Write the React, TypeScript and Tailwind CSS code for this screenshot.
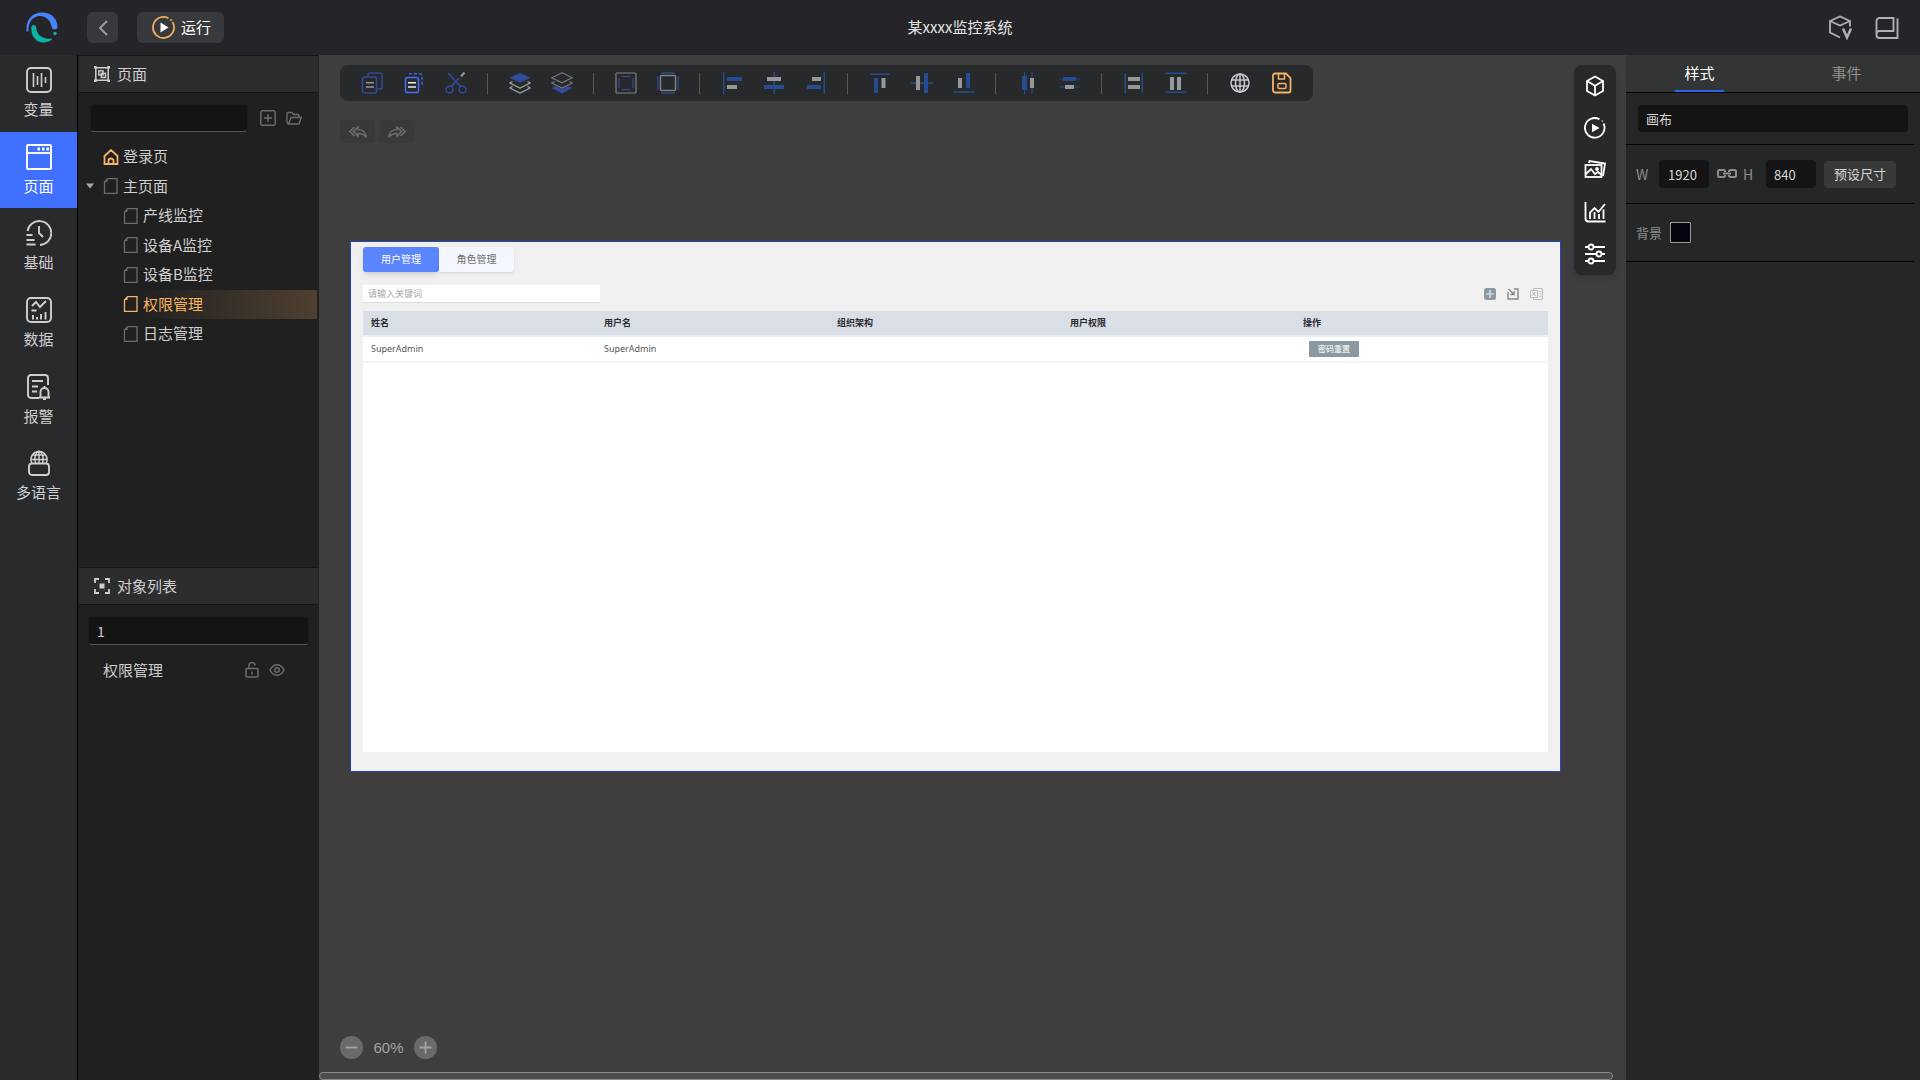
import type { ReactNode } from "react";

const BLUE = "#304a9c";
const ALIGN = "#254c90";
const GREY = "#969798";

function Svg({ size = 22, box = 22, weight = 1.5, children }: { size?: number; box?: number; weight?: number; children: ReactNode }) {
  return (
    <svg width={size} height={size} viewBox={`0 0 ${box} ${box}`} fill="none" stroke="currentColor" strokeWidth={weight} aria-hidden="true" className="shrink-0">
      {children}
    </svg>
  );
}

/* ---------- left rail ---------- */

const rail: { label: string; icon: ReactNode; active?: boolean }[] = [
  {
    label: "变量",
    icon: (
      <>
        <rect x="1" y="1" width="24" height="24" rx="4" />
        <path d="M7.500 6v14M11.500 9v9M15.500 6v14M19.500 10v6" strokeWidth="1.600" />
      </>
    ),
  },
  {
    label: "页面",
    active: true,
    icon: (
      <>
        <rect x="1" y="1" width="24" height="24" rx="1" />
        <path d="M1 9h24" />
        <path d="M11.500 5h2.500M16 5h2.500M20.500 5H23" strokeWidth="3" />
      </>
    ),
  },
  {
    label: "基础",
    icon: (
      <>
        <path d="M1.500 11A12 12 0 1 1 14 25" />
        <path d="M13 6v7l4 4M0.500 15h6M0.500 20h8M0.500 24.500h9" />
      </>
    ),
  },
  {
    label: "数据",
    icon: (
      <>
        <rect x="1" y="1" width="24" height="24" rx="4" />
        <path d="M6 9l4-4 4 5 6-6M5.500 13.500h5M7 18v4.500M11 20v2.500M15 17v5.500M19.500 15v7.500" />
      </>
    ),
  },
  {
    label: "报警",
    icon: (
      <>
        <path d="M13 24H5a3 3 0 0 1-3-3V4a3 3 0 0 1 3-3h14a3 3 0 0 1 3 3v7" />
        <path d="M6 7h11M6 12.500h6M6 17.500h5M13 23.500h11M14.500 23v-5a4 4 0 0 1 8 0v5M17 25.500h3M18.500 12v2" />
      </>
    ),
  },
  {
    label: "多语言",
    icon: (
      <>
        <path d="M5.800 13a8 8 0 1 1 14.400 0M5 9.500h16M6.500 5h13M13 1v12M9.500 13c-1.500-5-1-9 3.500-12M16.500 13c1.500-5 1-9-3.500-12" strokeWidth="1.500" />
        <rect x="3" y="13.500" width="20" height="11.500" rx="3" />
      </>
    ),
  },
];

/* ---------- canvas toolbar ---------- */

type Tool = { name: string; icon: ReactNode };

const toolGroups: Tool[][] = [
  [
    {
      name: "复制",
      icon: (
        <>
          <path d="M7 4V3a2 2 0 0 1 2-2h10a2 2 0 0 1 2 2v12a2 2 0 0 1-2 2h-3" stroke={BLUE} />
          <rect x="1.500" y="5" width="14" height="16" rx="2" stroke={BLUE} />
          <path d="M5 10.700h8M5 15h8" stroke={GREY} />
        </>
      ),
    },
    {
      name: "粘贴",
      icon: (
        <>
          <path d="M6 1.700h11a2 2 0 0 1 2 2V13" stroke="#3f66e8" strokeDasharray="3 2" />
          <rect x="2.500" y="5.500" width="13" height="15" rx="2" stroke="#4570ff" />
          <path d="M5 10.700h8M5 15h8" stroke="#eee" />
        </>
      ),
    },
    {
      name: "剪切",
      icon: (
        <>
          <circle cx="4.500" cy="17.500" r="3.500" stroke={BLUE} />
          <circle cx="17.500" cy="17.500" r="3.500" stroke={BLUE} />
          <path d="M3 1l12.500 13.500M6.500 14.500L14 6" stroke={BLUE} strokeWidth="1.800" />
          <path d="M16 4.500l3.500-4" stroke={GREY} strokeWidth="2" />
        </>
      ),
    },
  ],
  [
    {
      name: "置于顶层",
      icon: (
        <>
          <path d="M11 .8l10.500 5L11 10.800.500 5.800z" fill={BLUE} stroke="none" />
          <path d="M3.500 9.500L.800 11 11 16l10.200-5-2.700-1.500M3.500 14.500L.800 16 11 21l10.200-5-2.700-1.500" stroke="#a4a5a6" strokeWidth="1.200" />
        </>
      ),
    },
    {
      name: "置于底层",
      icon: (
        <>
          <path d="M.500 16l3.500-2 7 3 7-3 3.500 2L11 21.500z" fill={BLUE} stroke="none" />
          <path d="M11 .8l10.200 5L11 10.800.800 5.800zM3.500 9.500L.800 11 11 16l10.200-5-2.700-1.500" stroke="#77797a" strokeWidth="1.200" />
        </>
      ),
    },
  ],
  [
    {
      name: "组合",
      icon: (
        <>
          <rect x="1" y="1" width="20" height="20" rx="1" stroke="#808183" strokeWidth="1.200" />
          <path d="M6.500 4.500h9M6.500 17.500h9M4 6v10M18 6v10" stroke={BLUE} strokeWidth="1.200" />
        </>
      ),
    },
    {
      name: "取消组合",
      icon: (
        <>
          <rect x="3.500" y="3.500" width="15" height="15" rx="1" stroke="#808183" />
          <path d="M4 .800h14M4 21.200h14M.800 4v14M21.200 4v14" stroke={BLUE} strokeWidth="1.200" />
        </>
      ),
    },
  ],
  [
    {
      name: "左对齐",
      icon: (
        <g stroke="none">
          <path d="M2 0h1.500v22H2zM6 5h15v4H6z" fill={ALIGN} />
          <path d="M6 13h10v4H6z" fill={GREY} />
        </g>
      ),
    },
    {
      name: "水平居中",
      icon: (
        <g stroke="none">
          <path d="M10.500 0H12v22h-1.500zM1 13h20v4H1z" fill={ALIGN} />
          <path d="M4 5h14v4H4z" fill={GREY} />
        </g>
      ),
    },
    {
      name: "右对齐",
      icon: (
        <g stroke="none">
          <path d="M18.500 0H20v22h-1.500zM2 13h14v4H2z" fill={ALIGN} />
          <path d="M7 5h9v4H7z" fill={GREY} />
        </g>
      ),
    },
  ],
  [
    {
      name: "顶对齐",
      icon: (
        <g stroke="none">
          <path d="M1 1.500h20V3H1zM5 6h4v15H5z" fill={ALIGN} />
          <path d="M12.500 6h4v10h-4z" fill={GREY} />
        </g>
      ),
    },
    {
      name: "垂直居中",
      icon: (
        <g stroke="none">
          <path d="M0 10.200h22v1.600H0zM13 1h4v20h-4z" fill={ALIGN} />
          <path d="M5 4h4v14H5z" fill={GREY} />
        </g>
      ),
    },
    {
      name: "底对齐",
      icon: (
        <g stroke="none">
          <path d="M.500 19.200h21v1.600h-21zM13 1h4v15h-4z" fill={ALIGN} />
          <path d="M5 6h4v10H5z" fill={GREY} />
        </g>
      ),
    },
  ],
  [
    {
      name: "水平分布",
      icon: (
        <g stroke="none">
          <path d="M5 4h5v14H5zM7 0h1v22H7zM14.500 0h1v22h-1z" fill={ALIGN} />
          <path d="M13 6h4v10h-4z" fill={GREY} />
        </g>
      ),
    },
    {
      name: "垂直分布",
      icon: (
        <g stroke="none">
          <path d="M4 5h13v4H4zM.500 6.500h20v1h-20zM.500 14.500h20v1h-20z" fill={ALIGN} />
          <path d="M6 13h9v4H6z" fill={GREY} />
        </g>
      ),
    },
  ],
  [
    {
      name: "等宽",
      icon: (
        <g stroke="none">
          <path d="M1.500 1H3v20H1.500zM18.500 1H20v20h-1.500z" fill={ALIGN} />
          <path d="M5 5h12v4H5zM5 13h12v4H5z" fill={GREY} />
        </g>
      ),
    },
    {
      name: "等高",
      icon: (
        <g stroke="none">
          <path d="M.500 .500h21V2h-21zM.500 19.500h21V21h-21z" fill={ALIGN} />
          <path d="M5 5h4v13H5zM12 5h4v13h-4z" fill={GREY} />
        </g>
      ),
    },
  ],
  [
    {
      name: "语言",
      icon: (
        <g stroke="#c6c8cf">
          <circle cx="11" cy="11" r="9" />
          <ellipse cx="11" cy="11" rx="4.500" ry="9" />
          <path d="M11 2v18M2.500 8h17M2.500 14h17" />
        </g>
      ),
    },
    {
      name: "保存",
      icon: (
        <g stroke="#f5b266">
          <path d="M4 1.500h11l4.500 4.500v12.500a2 2 0 0 1-2 2H4a2 2 0 0 1-2-2v-15a2 2 0 0 1 2-2z" strokeWidth="1.800" />
          <path d="M7.500 2v5h6V2" />
          <rect x="7" y="11.500" width="8" height="5" rx="1" />
        </g>
      ),
    },
  ],
];

const palette: Tool[] = [
  { name: "组件", icon: <path d="M11 1.500l8 4.500v10l-8 4.500L3 16V6zM3 6l8 4.700L19 6M11 10.700v9.800" /> },
  {
    name: "动作",
    icon: (
      <>
        <path d="M19.500 6.500A9.800 9.800 0 1 1 15.500 2.300" />
        <circle cx="18.300" cy="4" r=".7" fill="currentColor" stroke="none" />
        <path d="M8 6.800v8.400l7.500-4.200z" fill="currentColor" stroke="none" />
      </>
    ),
  },
  {
    name: "图片",
    icon: (
      <>
        <rect x="1.500" y="6" width="16" height="12" />
        <path d="M5 4l.5-2 15.500 2.500-2 12.500M2 15l5-5 4 5 3-2 3.500 3" />
        <circle cx="13" cy="10" r="1" />
      </>
    ),
  },
  {
    name: "图表",
    icon: <path d="M1.500 1v16.500a3 3 0 0 0 3 3H21.500M6 18V11.500L10.500 7l4 4L21 3M10.500 18v-7M15 18v-5M19.500 18V8.500" />,
  },
  {
    name: "设置",
    icon: (
      <>
        <path d="M1 4h3.500M9.500 4H21M1 11h11.500M17.500 11H21M1 18h3.500M9.500 18H21" />
        <circle cx="7" cy="4" r="2.500" />
        <circle cx="15" cy="11" r="2.500" />
        <circle cx="7" cy="18" r="2.500" />
      </>
    ),
  },
];

/* ---------- page tree ---------- */

const children = [
  { label: "产线监控" },
  { label: "设备A监控" },
  { label: "设备B监控" },
  { label: "权限管理", active: true },
  { label: "日志管理" },
];

function FileIcon({ className }: { className: string }) {
  return (
    <svg width="16" height="16" viewBox="0 0 16 16" fill="none" stroke="currentColor" strokeWidth="1.300" aria-hidden="true" className={className}>
      <path d="M4.500 .700h9.500v14.600H1.500V4z" />
      <path d="M4.500 .700V4h-3z" fill="currentColor" stroke="none" />
    </svg>
  );
}

function PanelTitle({ icon, children: text }: { icon: ReactNode; children: string }) {
  return (
    <h2 className="mx-px flex h-[38px] shrink-0 items-center gap-[7px] border-y border-[#161616] bg-[#2d2d30] pl-[15px] text-[15px] text-[#cfcfcf]">
      <Svg size={16} box={16}>{icon}</Svg>
      {text}
    </h2>
  );
}

function Sidebar() {
  return (
    <aside className="flex w-[241px] shrink-0 flex-col bg-[#202020] text-[15px] text-[#cfcfcf]">
      <PanelTitle
        icon={
          <>
            <path d="M1.800 1.800h12.400v12.400H1.800z" />
            <path d="M0 1.300h2.600M13.400 1.300H16M0 14.700h2.600M13.400 14.700H16" strokeWidth="2.600" />
            <rect x="4.800" y="4.800" width="4.200" height="4.200" strokeWidth="1.400" />
            <rect x="7.300" y="7.300" width="4.200" height="4.200" strokeWidth="1.400" />
          </>
        }
      >
        页面
      </PanelTitle>
      <div className="mt-[11px] flex items-center pr-[17px] pl-3">
        <input aria-label="搜索页面" className="h-[28px] min-w-0 flex-1 rounded border border-[#1c1c1c] border-b-[#555] bg-[#141414] px-2 text-[13px] outline-none" />
        <button aria-label="新建页面" className="ml-3 text-[#6b6b6b]">
          <Svg size={16} box={16}>
            <rect x=".8" y=".8" width="14.400" height="14.400" rx="2" />
            <path d="M8 4v8M4 8h8" />
          </Svg>
        </button>
        <button aria-label="新建文件夹" className="ml-[10px] text-[#6b6b6b]">
          <Svg size={16} box={16}>
            <path d="M2.500 14L1 12.500v-9a1 1 0 0 1 1-1h4l1.500 2H12a1 1 0 0 1 1 1V7M2.500 14L5 7.500h10.300L13 14z" strokeWidth="1.400" />
          </Svg>
        </button>
      </div>
      <ul className="mt-[10px] flex h-[206px] flex-col justify-between">
        <li className="flex h-[29px] items-center gap-1 pl-[25px]">
          <svg width="16" height="16" viewBox="0 0 16 16" fill="none" stroke="#f5b266" strokeWidth="1.800" aria-hidden="true">
            <path d="M1.500 7L8 1l6.500 6v8h-13zM5.500 15v-3a2.500 2.500 0 0 1 5 0v3" />
          </svg>
          登录页
        </li>
        <li className="flex h-[29px] items-center gap-1 pl-2">
          <button aria-label="折叠" className="mr-[5px]">
            <svg width="8" height="6" viewBox="0 0 8 6" aria-hidden="true">
              <path d="M0 .500h8L4 5.500z" fill="#aaa" />
            </svg>
          </button>
          <FileIcon className="text-[#6b6b6b]" />
          主页面
        </li>
        {children.map((c) =>
          c.active ? (
            <li key={c.label} className="mr-[2px] flex h-[29px] items-center gap-1 bg-linear-to-r from-[#202020] from-25% to-[#4f4030] pl-[45px] text-[#f8b45f]">
              <FileIcon className="text-[#f5b266]" />
              {c.label}
            </li>
          ) : (
            <li key={c.label} className="flex h-[29px] items-center gap-1 pl-[45px]">
              <FileIcon className="text-[#6b6b6b]" />
              {c.label}
            </li>
          ),
        )}
      </ul>
      <div className="h-[219px] shrink-0" />
      <PanelTitle
        icon={
          <>
            <path d="M1 5V1h4M11 1h4v4M15 11v4h-4M5 15H1v-4" strokeWidth="1.800" />
            <path d="M5.500 5.500h5v5h-5z" fill="currentColor" stroke="none" />
          </>
        }
      >
        对象列表
      </PanelTitle>
      <div className="mt-[11px] px-[10px]">
        <input aria-label="搜索对象" defaultValue="1" className="h-[29px] w-full rounded border border-[#1c1c1c] border-b-[#555] bg-[#141414] px-2 text-[14px] outline-none" />
      </div>
      <div className="mt-[10px] flex h-[30px] items-center pr-[34px] pl-[25px]">
        <span className="flex-1">权限管理</span>
        <button aria-label="锁定" className="text-[#6b6b6b]">
          <Svg size={16} box={16}>
            <rect x="2" y="6.500" width="12" height="8.500" rx="1" />
            <path d="M5 6.500V3.500a3 3 0 0 1 6 0M8 9.500v3" />
          </Svg>
        </button>
        <button aria-label="显示" className="ml-[9px] text-[#6b6b6b]">
          <Svg size={16} box={16}>
            <path d="M1 8c3.500-7 10.500-7 14 0-3.500 7-10.500 7-14 0z" />
            <circle cx="8" cy="8" r="2.300" />
          </Svg>
        </button>
      </div>
    </aside>
  );
}

/* ---------- artboard ---------- */

function Artboard() {
  return (
    <section className="flex aspect-[1211/531] w-full flex-col border border-[#2447b4] bg-[#f0f0f0] px-3 pt-[5px] pb-[19px] font-['Noto_Sans','Noto_Sans_CJK_SC',sans-serif] text-[9px] text-[#55565a]">
      <div role="tablist" className="flex text-[10px]">
        <button role="tab" aria-selected="true" className="h-[25px] w-[76px] rounded-[3px] bg-[#5b84ff] text-white shadow-md">用户管理</button>
        <button role="tab" aria-selected="false" className="h-[25px] w-[75px] rounded-r-[3px] bg-[#f4f7ff] text-[#6c6c6c] shadow-sm">角色管理</button>
      </div>
      <div className="mt-[13px] flex h-[18px] items-center">
        <input aria-label="关键词" placeholder="请输入关键词" className="h-[18px] w-[237px] border-b border-[#dcdcde] bg-white px-[5px] text-[9px] outline-none placeholder:text-[#a8a8ac]" />
        <button aria-label="新增" className="ml-auto">
          <svg width="12" height="12" viewBox="0 0 12 12" aria-hidden="true">
            <rect width="12" height="12" rx="2.500" fill="#8b9aa2" />
            <path d="M6 2v8M2 6h8" stroke="#eee" strokeWidth="1.200" />
          </svg>
        </button>
        <button aria-label="导入" className="ml-[11px]">
          <svg width="12" height="12" viewBox="0 0 12 12" fill="none" stroke="#858789" strokeWidth="1.400" aria-hidden="true">
            <path d="M1 4v7h10V1H7M1.500 1l5.500 5.500M7 3v3.500H3.500" />
          </svg>
        </button>
        <button aria-label="导出表格" className="mr-[5px] ml-[11px]">
          <svg width="13" height="12" viewBox="0 0 13 12" fill="none" stroke="#bdbdc2" aria-hidden="true">
            <path d="M3.500 2.500V.500h9v11h-9v-2M.500 2.500h7v7h-7zM2.500 4l3 4M5.500 4l-3 4M9.500 3.500h2M9.500 6h2M9.500 8.500h2" />
          </svg>
        </button>
      </div>
      <div className="mt-2 min-h-0 flex-1 bg-white">
        <table className="w-full table-fixed border-collapse text-left">
          <thead>
            <tr className="h-[25px] border-b-2 border-[#e9edf5] bg-[#dadee7] text-[#2a2a30]">
              <th className="w-[233px] pl-[8px] font-bold">姓名</th>
              <th className="w-[233px] pl-[8px] font-bold">用户名</th>
              <th className="w-[233px] pl-[8px] font-bold">组织架构</th>
              <th className="w-[233px] pl-[8px] font-bold">用户权限</th>
              <th className="pl-[8px] font-bold">操作</th>
            </tr>
          </thead>
          <tbody>
            <tr className="h-[26px] border-b-2 border-[#f4f5fb]">
              <td className="pl-[8px]">SuperAdmin</td>
              <td className="pl-[8px]">SuperAdmin</td>
              <td />
              <td />
              <td className="pl-[14px]">
                <button className="block h-[16px] w-[50px] rounded-[1px] bg-[#8b9aa2] text-[8px] leading-[14px] font-bold text-[#e4e8ea]">密码重置</button>
              </td>
            </tr>
          </tbody>
        </table>
      </div>
    </section>
  );
}

/* ---------- canvas ---------- */

function Canvas() {
  return (
    <main className="flex min-w-0 flex-1 flex-col bg-[#3e3e3e]">
      <div className="flex items-start pr-[10px] pl-[21px]">
        <div className="flex flex-1 flex-col pt-[10px]">
          <div role="toolbar" aria-label="编辑" className="flex h-[36px] items-center gap-5 self-start rounded-lg bg-[#27292b] pr-5 pl-[21px]">
            {toolGroups.map((group, i) => (
              <div key={i} className="flex items-center gap-5">
                {i > 0 && <span className="flex h-[21px] w-[2px] border-l border-[#55575a]" />}
                {group.map((t) => (
                  <button key={t.name} aria-label={t.name} className="size-[22px]">
                    <Svg>{t.icon}</Svg>
                  </button>
                ))}
              </div>
            ))}
          </div>
          <div className="mt-[19px] flex gap-1 text-[#6b6b6b]">
            <button aria-label="撤销" className="flex h-[23px] w-[35px] items-center justify-center rounded-sm bg-[#393939]">
              <svg width="18" height="12" viewBox="0 0 18 12" fill="none" stroke="currentColor" strokeWidth="1.600" aria-hidden="true">
                <path d="M5.500 1L1 5.500 5.500 10M9 1L4.500 5.500 9 10V7.500c3 0 6.500 .5 8.200 4C17 7 14 3.500 9 3.500z" />
              </svg>
            </button>
            <button aria-label="重做" className="flex h-[23px] w-[35px] items-center justify-center rounded-sm bg-[#393939]">
              <svg width="18" height="12" viewBox="0 0 18 12" fill="none" stroke="currentColor" strokeWidth="1.600" aria-hidden="true">
                <path d="M12.500 1L17 5.500 12.500 10M9 1l4.500 4.500L9 10V7.500c-3 0-6.500 .5-8.200 4C1 7 4 3.500 9 3.500z" />
              </svg>
            </button>
          </div>
          <div className="mt-[98px] mr-[13px] ml-[10px]">
            <Artboard />
          </div>
        </div>
        <div className="mt-[10px] flex w-[42px] flex-col items-center gap-5 rounded-lg bg-[#27292b] py-[10px] text-white shadow-md">
          {palette.map((t) => (
            <button key={t.name} aria-label={t.name} className="size-[22px]">
              <Svg weight={1.8}>{t.icon}</Svg>
            </button>
          ))}
        </div>
      </div>
      <div className="mt-auto flex items-center pl-[21px]">
        <button aria-label="缩小" className="flex size-[23px] items-center justify-center rounded-full bg-[#6a6a6a] text-[#a3a3a3]">
          <Svg size={13} box={13}><path d="M.500 6.500h12" strokeWidth="1.800" /></Svg>
        </button>
        <span className="w-[51px] text-center font-['Liberation_Sans',sans-serif] text-[15px] leading-[22px] text-[#a3a3a3]">60%</span>
        <button aria-label="放大" className="flex size-[23px] items-center justify-center rounded-full bg-[#6a6a6a] text-[#a3a3a3]">
          <Svg size={13} box={13}><path d="M.500 6.500h12M6.500 .500v12" strokeWidth="1.800" /></Svg>
        </button>
      </div>
      <div className="mt-[13px] mr-[13px] h-2 rounded border border-[#8a8a8a] bg-[#4d4d4d]" />
    </main>
  );
}

/* ---------- inspector ---------- */

function Inspector() {
  return (
    <aside className="w-[294px] shrink-0 bg-[#252726] text-[13px] text-[#8c8d8c]">
      <div role="tablist" className="flex h-[38px] border-b border-black bg-[#333534] text-[15px]">
        <button role="tab" aria-selected="true" className="flex flex-1 justify-center text-white">
          <span className="h-[37px] w-[49px] border-b-2 border-[#2468f2] text-center leading-[36px]">样式</span>
        </button>
        <button role="tab" aria-selected="false" className="flex flex-1 justify-center">
          <span className="leading-[36px]">事件</span>
        </button>
      </div>
      <div className="mr-[6px]">
        <div className="border-b border-black py-3 pr-[6px] pl-3">
          <input aria-label="名称" defaultValue="画布" className="h-[27px] w-full rounded bg-[#141414] px-2 text-[#d6d6d6] outline-none" />
        </div>
        <div className="flex h-[59px] items-center border-b border-black pl-[10px] text-[14px]">
          <label htmlFor="w" className="w-[23px]">W</label>
          <input id="w" defaultValue="1920" className="h-[28px] w-[50px] rounded bg-[#141414] pl-[9px] text-[13px] text-[#d6d6d6] outline-none" />
          <button aria-label="锁定比例" className="ml-2">
            <svg width="20" height="12" viewBox="0 0 20 12" fill="none" stroke="currentColor" strokeWidth="2" aria-hidden="true" className="block">
              <path d="M8 4V3.500A1.500 1.500 0 0 0 6.500 2h-4A1.500 1.500 0 0 0 1 3.500v4A1.500 1.500 0 0 0 2.500 9h4A1.500 1.500 0 0 0 8 7.500V7M12 4V3.500A1.500 1.500 0 0 1 13.500 2h4A1.500 1.500 0 0 1 19 3.500v4A1.500 1.500 0 0 1 17.500 9h-4A1.500 1.500 0 0 1 12 7.500V7M6 5.500h8" />
            </svg>
          </button>
          <label htmlFor="h" className="ml-[6px] w-[23px]">H</label>
          <input id="h" defaultValue="840" className="h-[28px] w-[50px] rounded bg-[#141414] pl-2 text-[13px] text-[#d6d6d6] outline-none" />
          <button className="ml-2 h-[27px] w-[72px] rounded bg-[#383a3a] text-[13px] text-[#d6d6d6]">预设尺寸</button>
        </div>
        <div className="flex h-[58px] items-center gap-2 border-b border-black pl-[10px]">
          <label htmlFor="bg">背景</label>
          <input id="bg" type="color" defaultValue="#03060f" className="size-[21px] appearance-none rounded-[1px] border border-[#999] [&::-webkit-color-swatch]:border-none [&::-webkit-color-swatch-wrapper]:p-0" />
        </div>
      </div>
    </aside>
  );
}

export default function App() {
  return (
    <div className="flex min-h-screen flex-col bg-[#3e3e3e] font-['Noto_Sans_CJK_SC',sans-serif]">
      <header className="grid h-[55px] shrink-0 grid-cols-[1fr_auto_1fr] items-center bg-[#242429] text-[15px]">
        <div className="flex items-center pl-[26px]">
          <svg width="32" height="32" viewBox="0 0 32 32" fill="none" aria-hidden="true">
            <path d="M.600 19.500C-.800 8.500 6 .500 16 .500c9 0 15.500 6 15.500 14.500 0 3-4.800 3.500-5.700 .5C25 8 19 3.500 13 4 6 5 2 11 2.500 19.500z" fill="#4584fb" />
            <path d="M5.200 16c0-3.500 4.500-4 5-.5C10.500 22.500 16 27.500 26.500 26.800c-3.500 4-9.500 4.700-14 2.700C7.500 27 5.200 21.500 5.200 16z" fill="#0bb3a2" />
            <circle cx="29" cy="21.500" r="1.700" fill="#0bb3a2" />
          </svg>
          <button aria-label="返回" className="ml-[29px] flex size-[31px] items-center justify-center rounded-md bg-[#38393c] text-[#9a9a9a]">
            <svg width="10" height="16" viewBox="0 0 10 16" fill="none" stroke="currentColor" strokeWidth="2" aria-hidden="true">
              <path d="M9 1L2 8l7 7" />
            </svg>
          </button>
          <button className="ml-[19px] flex h-[31px] w-[87px] items-center gap-[6px] rounded-md bg-[#38393c] pl-[15px] text-white">
            <svg width="23" height="23" viewBox="0 0 23 23" fill="none" aria-hidden="true">
              <path d="M20.500 6A10.500 10.500 0 1 1 16.500 2.200" stroke="#f0ac60" strokeWidth="1.800" />
              <circle cx="19" cy="4" r="1" fill="#f0ac60" />
              <path d="M8.500 6.500v10l8-5z" fill="#fff" />
            </svg>
            运行
          </button>
        </div>
        <h1 className="text-[#e6e6e6]">某xxxx监控系统</h1>
        <div className="flex items-center justify-end gap-[22px] pr-[21px] text-[#b0b0b3]">
          <button aria-label="版本">
            <Svg size={25} box={25}>
              <path d="M12 22.500L2 17.500V6L12 1.500 22 6v5.500M2 6l10 4.500L22 6" strokeWidth="1.900" />
              <path d="M15 13.500l4 9 4-9" strokeWidth="2.500" />
            </Svg>
          </button>
          <button aria-label="文档">
            <Svg size={24} box={24}>
              <path d="M18.500 15V2H4.500A3 3 0 0 0 1.500 5v14a3 3 0 0 0 3 3h18V2.500M19.400 15H4.500a3 3 0 0 0-3 3" strokeWidth="1.900" />
            </Svg>
          </button>
        </div>
      </header>
      <div className="flex flex-1">
        <nav className="w-[78px] shrink-0 border-r border-black bg-[#292a2c] text-[15px]">
          <div className="grid h-[460px] grid-rows-6">
            {rail.map((r) => (
              <a
                key={r.label}
                href="#"
                aria-current={r.active ? "page" : undefined}
                className={
                  r.active
                    ? "flex flex-col items-center gap-1 bg-[#4070ff] pt-3 leading-[24px] text-white"
                    : "flex flex-col items-center gap-1 pt-3 leading-[24px] text-[#cfcfcf]"
                }
              >
                <Svg size={26} box={26} weight={1.9}>{r.icon}</Svg>
                {r.label}
              </a>
            ))}
          </div>
        </nav>
        <Sidebar />
        <Canvas />
        <Inspector />
      </div>
    </div>
  );
}
